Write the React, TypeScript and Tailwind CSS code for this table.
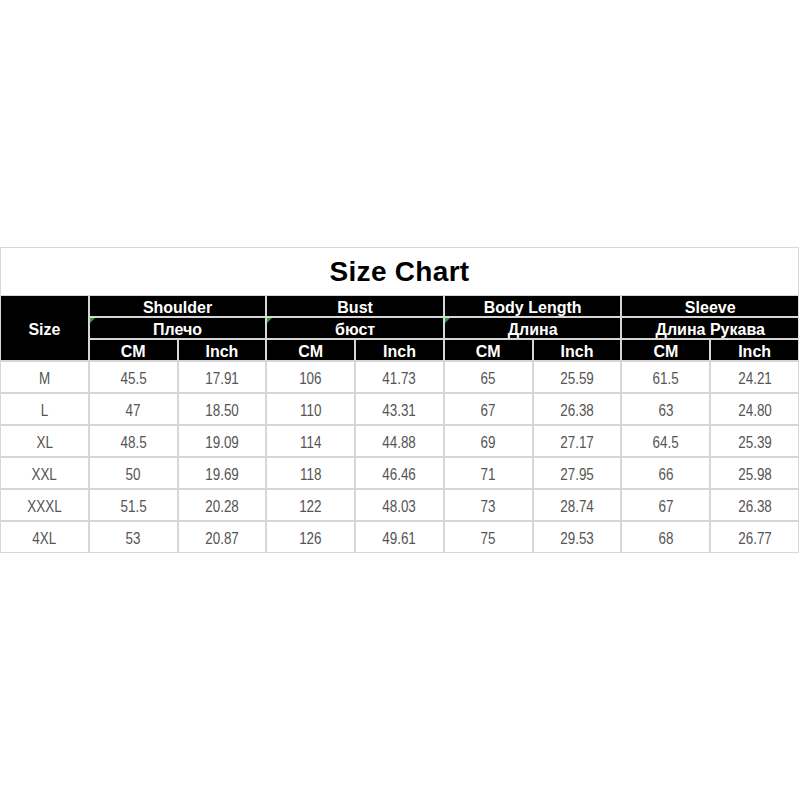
import React from "react";

const rows = [
  ["M", "45.5", "17.91", "106", "41.73", "65", "25.59", "61.5", "24.21"],
  ["L", "47", "18.50", "110", "43.31", "67", "26.38", "63", "24.80"],
  ["XL", "48.5", "19.09", "114", "44.88", "69", "27.17", "64.5", "25.39"],
  ["XXL", "50", "19.69", "118", "46.46", "71", "27.95", "66", "25.98"],
  ["XXXL", "51.5", "20.28", "122", "48.03", "73", "28.74", "67", "26.38"],
  ["4XL", "53", "20.87", "126", "49.61", "75", "29.53", "68", "26.77"],
];

const groups = [
  { en: "Shoulder", ru: "Плечо", mark: true },
  { en: "Bust", ru: "бюст", mark: true },
  { en: "Body Length", ru: "Длина", mark: true },
  { en: "Sleeve", ru: "Длина Рукава", mark: false },
];

const head = "bg-black text-white font-bold text-[16px] leading-none flex items-center justify-center pt-[3px]";

export default function App() {
  return (
    <div className="min-h-[800px] w-[800px] bg-white pt-[247px]" style={{ fontFamily: '"Liberation Sans", Arial, sans-serif' }}>
      <div className="w-[799px] border border-[#d8d8d8]">
        <div className="h-[47px] flex items-center justify-center text-[28px] font-bold text-black leading-none tracking-[0.3px]">
          Size Chart
        </div>
        <div className="grid grid-cols-9 grid-rows-[20px_20px_20px_repeat(6,30px)] gap-[2px] bg-[#d6d6d6] pt-[1px]">
          <div className={`${head} row-span-3`}>Size</div>
          {groups.map((g) => (
            <div key={g.en} className={`${head} col-span-2`}>{g.en}</div>
          ))}
          {groups.map((g) => (
            <div key={g.ru} className={`${head} col-span-2 relative`}>
              {g.mark && (
                <span className="absolute left-0 top-0 w-0 h-0 border-t-[5px] border-t-[#2f9e3a] border-r-[5px] border-r-transparent" />
              )}
              {g.ru}
            </div>
          ))}
          {groups.map((g) => (
            <React.Fragment key={g.en + "u"}>
              <div className={head}>CM</div>
              <div className={head}>Inch</div>
            </React.Fragment>
          ))}
          {rows.map((r) =>
            r.map((c, i) => (
              <div
                key={r[0] + i}
                className="bg-white flex items-center justify-center text-[#555] text-[16px] leading-none pt-[3px]"
              >
                <span className="inline-block scale-x-[0.84]">{c}</span>
              </div>
            ))
          )}
        </div>
      </div>
    </div>
  );
}
